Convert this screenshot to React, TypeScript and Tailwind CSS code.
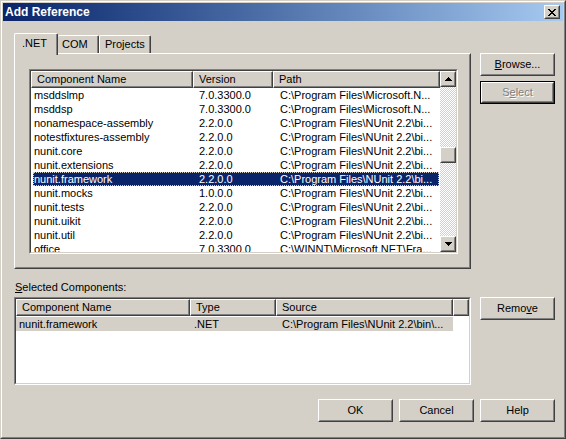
import React from "react";

const FONT = "font-['Liberation_Sans',Arial,sans-serif]";

function Raised({
  className = "",
  innerClassName = "",
  children,
}: {
  className?: string;
  innerClassName?: string;
  children?: React.ReactNode;
}) {
  return (
    <div
      className={`border border-t-white border-l-white border-r-[#404040] border-b-[#404040] bg-[#d4d0c8] ${className}`}
    >
      <div
        className={`h-full w-full border border-t-[#d4d0c8] border-l-[#d4d0c8] border-r-[#808080] border-b-[#808080] ${innerClassName}`}
      >
        {children}
      </div>
    </div>
  );
}

function Sunken({
  className = "",
  innerClassName = "",
  children,
}: {
  className?: string;
  innerClassName?: string;
  children?: React.ReactNode;
}) {
  return (
    <div
      className={`border border-t-[#808080] border-l-[#808080] border-r-white border-b-white ${className}`}
    >
      <div
        className={`h-full w-full border border-t-[#404040] border-l-[#404040] border-r-[#d4d0c8] border-b-[#d4d0c8] bg-white ${innerClassName}`}
      >
        {children}
      </div>
    </div>
  );
}

function Button({
  children,
  isDefault = false,
  disabled = false,
}: {
  children: React.ReactNode;
  isDefault?: boolean;
  disabled?: boolean;
}) {
  const label = (
    <span
      className={
        disabled
          ? "text-[#808080] [text-shadow:1px_1px_0_#ffffff]"
          : "text-black"
      }
    >
      {children}
    </span>
  );
  if (isDefault) {
    return (
      <div className="w-[75px] h-[23px] border border-black">
        <Raised
          className="h-full w-full"
          innerClassName="flex items-center justify-center text-[11px] leading-none"
        >
          {label}
        </Raised>
      </div>
    );
  }
  return (
    <Raised
      className="w-[75px] h-[23px]"
      innerClassName="flex items-center justify-center text-[11px] leading-none"
    >
      {label}
    </Raised>
  );
}

function HeaderCell({ w, children }: { w: string; children?: React.ReactNode }) {
  return (
    <div
      className={`${w} h-[17px] shrink-0 border border-t-white border-l-white border-r-[#404040] border-b-[#404040] bg-[#d4d0c8]`}
    >
      <div className="h-full w-full border-r border-b border-r-[#808080] border-b-[#808080] pl-[5px] text-[11px] leading-[14px] whitespace-nowrap overflow-hidden">
        {children}
      </div>
    </div>
  );
}

function Arrow({ up }: { up: boolean }) {
  return (
    <svg width="7" height="4" viewBox="0 0 7 4" shapeRendering="crispEdges">
      <path
        fill="#000"
        d={
          up
            ? "M3 0h1v1H3z M2 1h3v1H2z M1 2h5v1H1z M0 3h7v1H0z"
            : "M0 0h7v1H0z M1 1h5v1H1z M2 2h3v1H2z M3 3h1v1H3z"
        }
      />
    </svg>
  );
}

const P = "C:\\Program Files\\";
const NU = P + "NUnit 2.2\\bi...";
const rows: [string, string, string][] = [
  ["msddslmp", "7.0.3300.0", P + "Microsoft.N..."],
  ["msddsp", "7.0.3300.0", P + "Microsoft.N..."],
  ["nonamespace-assembly", "2.2.0.0", NU],
  ["notestfixtures-assembly", "2.2.0.0", NU],
  ["nunit.core", "2.2.0.0", NU],
  ["nunit.extensions", "2.2.0.0", NU],
  ["nunit.framework", "2.2.0.0", NU],
  ["nunit.mocks", "1.0.0.0", NU],
  ["nunit.tests", "2.2.0.0", NU],
  ["nunit.uikit", "2.2.0.0", NU],
  ["nunit.util", "2.2.0.0", NU],
  ["office", "7.0.3300.0", "C:\\WINNT\\Microsoft.NET\\Fra..."],
];

export default function App() {
  return (
    <div
      className={`w-[566px] h-[439px] ${FONT} text-black border border-t-[#d4d0c8] border-l-[#d4d0c8] border-r-[#404040] border-b-[#404040]`}
    >
      <div className="h-full w-full border border-t-white border-l-white border-r-[#808080] border-b-[#808080] bg-[#d4d0c8] p-px flex flex-col">
        {/* Title bar */}
        <div className="h-[18px] shrink-0 flex items-center justify-between pl-[2px] pr-[3px] bg-linear-to-r from-[#0a246a] to-[#a6caf0]">
          <span className="text-white font-bold text-[12px] leading-none">
            Add Reference
          </span>
          <Raised
            className="w-[16px] h-[14px]"
            innerClassName="flex items-center justify-center pr-px"
          >
            <svg width="8" height="7" viewBox="0 0 8 7" shapeRendering="crispEdges">
              <path
                fill="#000"
                d="M0 0h2v1H0z M6 0h2v1H6z M1 1h2v1H1z M5 1h2v1H5z M2 2h4v1H2z M3 3h2v1H3z M2 4h4v1H2z M1 5h2v1H1z M5 5h2v1H5z M0 6h2v1H0z M6 6h2v1H6z"
              />
            </svg>
          </Raised>
        </div>

        {/* Body */}
        <div className="flex-1 flex flex-col pl-[11px] pr-[8px] pt-[12px]">
          {/* Top row: tabs + right buttons */}
          <div className="flex items-start gap-[9px]">
            <div className="w-[457px] flex flex-col">
              {/* Tab strip */}
              <div className="h-[20px] flex items-end text-[11px]">
                <div className="relative z-10 w-[44px] h-[22px] -mb-[2px] bg-[#d4d0c8] border-t border-l border-t-white border-l-white rounded-tl-[2px] border-r border-r-[#404040] rounded-tr-[2px]">
                  <div className="h-full w-full border-r border-r-[#808080] pl-[7px] pt-[3px] leading-[13px]">
                    .NET
                  </div>
                </div>
                <div className="w-[41px] h-[18px] border-t border-t-white border-r border-r-[#404040] rounded-t-[2px]">
                  <div className="h-full w-full border-r border-r-[#808080] pl-[4px] pt-[2px] leading-[13px]">
                    COM
                  </div>
                </div>
                <div className="w-[52px] h-[18px] border-t border-l border-t-white border-l-white border-r border-r-[#404040] rounded-t-[2px]">
                  <div className="h-full w-full border-r border-r-[#808080] pl-[5px] pt-[2px] leading-[13px]">
                    Projects
                  </div>
                </div>
              </div>
              {/* Tab panel */}
              <Raised
                className="w-[457px] h-[216px]"
                innerClassName="pl-[13px] pt-[14px]"
              >
                <Sunken className="w-[429px] h-[185px]" innerClassName="flex">
                  <div className="w-[409px] flex flex-col overflow-hidden">
                    <div className="flex shrink-0">
                      <HeaderCell w="w-[162px]">Component Name</HeaderCell>
                      <HeaderCell w="w-[80px]">Version</HeaderCell>
                      <HeaderCell w="w-[167px]">Path</HeaderCell>
                    </div>
                    <div className="flex flex-col overflow-hidden">
                      {rows.map(([n, v, p]) => {
                        const sel = n === "nunit.framework";
                        return (
                          <div
                            key={n}
                            className={`ml-[2px] w-[406px] h-[14px] shrink-0 flex text-[11px] leading-[14px] whitespace-nowrap ${
                              sel
                                ? "bg-[#0a246a] text-white outline-1 outline-dotted outline-[#d4d0c8] -outline-offset-1"
                                : "text-black"
                            }`}
                          >
                            <div className="w-[160px] pl-px overflow-hidden">{n}</div>
                            <div className="w-[80px] pl-[6px] overflow-hidden">{v}</div>
                            <div className="w-[166px] pl-[7px] overflow-hidden">{p}</div>
                          </div>
                        );
                      })}
                    </div>
                  </div>
                  {/* Scrollbar */}
                  <div className="w-[16px] flex flex-col">
                    <Raised
                      className="w-[16px] h-[16px] shrink-0"
                      innerClassName="flex items-center justify-center pb-px"
                    >
                      <Arrow up />
                    </Raised>
                    <div className="flex-1 bg-[image:repeating-conic-gradient(#ffffff_0%_25%,#d4d0c8_0%_50%)] bg-[length:2px_2px]">
                      <Raised className="w-[16px] h-[16px] mt-[60px]" />
                    </div>
                    <Raised
                      className="w-[16px] h-[16px] shrink-0"
                      innerClassName="flex items-center justify-center"
                    >
                      <Arrow up={false} />
                    </Raised>
                  </div>
                </Sunken>
              </Raised>
            </div>
            <div className="w-[75px] flex flex-col gap-[5px] pt-[20px]">
              <Button>
                <span className="underline underline-offset-1">B</span>rowse...
              </Button>
              <Button isDefault disabled>
                S<span className="underline underline-offset-1">e</span>lect
              </Button>
            </div>
          </div>

          {/* Selected components */}
          <div className="flex items-start gap-[9px] mt-[11px]">
            <div className="w-[457px] flex flex-col">
              <div className="h-[14px] text-[11px] leading-[14px] pl-px">
                <span className="underline underline-offset-1">S</span>elected Components:
              </div>
              <Sunken className="w-[457px] h-[88px] mt-[3px]" innerClassName="flex flex-col">
                <div className="flex shrink-0">
                  <HeaderCell w="w-[174px]">Component Name</HeaderCell>
                  <HeaderCell w="w-[86px]">Type</HeaderCell>
                  <HeaderCell w="w-[177px]">Source</HeaderCell>
                  <HeaderCell w="w-[16px]" />
                </div>
                <div className="mt-px w-[437px] h-[14px] flex bg-[#d4d0c8] text-[11px] leading-[14px] whitespace-nowrap">
                  <div className="w-[174px] pl-[3px] overflow-hidden">nunit.framework</div>
                  <div className="w-[86px] pl-[4px] overflow-hidden">.NET</div>
                  <div className="w-[177px] pl-[6px] overflow-hidden">
                    {"C:\\Program Files\\NUnit 2.2\\bin\\..."}
                  </div>
                </div>
              </Sunken>
            </div>
            <div className="w-[75px] pt-[17px]">
              <Button>
                Remo<span className="underline underline-offset-1">v</span>e
              </Button>
            </div>
          </div>

          {/* Bottom buttons */}
          <div className="flex justify-end gap-[6px] mt-[14px]">
            <Button>OK</Button>
            <Button>Cancel</Button>
            <Button>Help</Button>
          </div>
        </div>
      </div>
    </div>
  );
}
